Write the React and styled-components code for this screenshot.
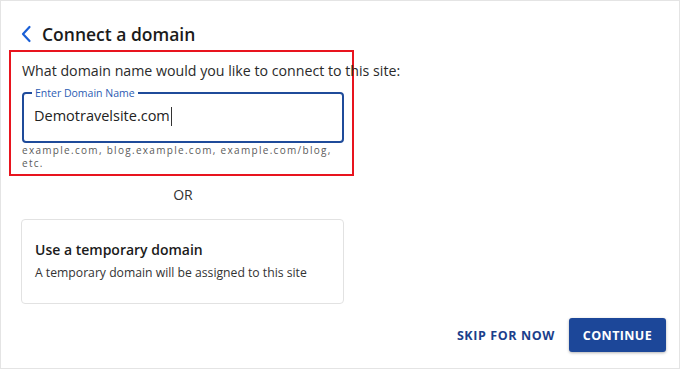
import React from "react";
import styled, { createGlobalStyle } from "styled-components";

const GlobalStyle = createGlobalStyle`
  html, body {
    margin: 0;
    padding: 0;
    background: #fff;
  }
  * {
    box-sizing: border-box;
  }
`;

const BackIcon = () => (
  <svg width="12" height="18" viewBox="0 0 12 18" fill="none">
    <path
      d="M9.5 2 L3 9 L9.5 16"
      stroke="#1a5fd6"
      strokeWidth="2.2"
      strokeLinecap="round"
      strokeLinejoin="round"
    />
  </svg>
);

const App = () => {
  return (
    <>
      <GlobalStyle />
      <Frame>
        <Header>
          <BackIcon />
          <Title>Connect a domain</Title>
        </Header>

        <Highlight>
          <Question>What domain name would you like to connect to this site:</Question>
          <Field>
            <Legend>Enter Domain Name</Legend>
            <FieldValue>
              Demotravelsite.com
              <Caret />
            </FieldValue>
          </Field>
          <Helper>example.com, blog.example.com, example.com/blog, etc.</Helper>
        </Highlight>

        <Divider>OR</Divider>

        <Card>
          <CardTitle>Use a temporary domain</CardTitle>
          <CardText>A temporary domain will be assigned to this site</CardText>
        </Card>

        <Actions>
          <TextButton>SKIP FOR NOW</TextButton>
          <PrimaryButton>CONTINUE</PrimaryButton>
        </Actions>
      </Frame>
    </>
  );
};

export default App;

const Frame = styled.div`
  width: 680px;
  height: 369px;
  border: 1px solid #e4e4e4;
  display: flex;
  flex-direction: column;
  font-family: "Open Sans", "Noto Sans", sans-serif;
  color: #222;
  overflow: hidden;
`;

const Header = styled.div`
  display: flex;
  align-items: center;
  gap: 10px;
  height: 24px;
  margin-top: 21px;
  padding-left: 19px;
`;

const Title = styled.h1`
  margin: 0;
  font-size: 17.5px;
  font-weight: 600;
  line-height: 24px;
  color: #1b1b1b;
`;

const Highlight = styled.div`
  margin: 4px 0 0 8px;
  width: 345px;
  height: 126px;
  border: 2px solid #e8141e;
  padding: 9px 10px 0 11px;
  display: flex;
  flex-direction: column;
`;

const Question = styled.p`
  margin: 0;
  font-size: 14.2px;
  line-height: 20px;
  color: #2a2a2a;
  white-space: nowrap;
`;

const Field = styled.fieldset`
  margin: 6px 0 0 0;
  width: 322px;
  height: 56px;
  border: 2px solid #1f4b9a;
  border-radius: 4px;
  padding: 0 10px;
`;

const Legend = styled.legend`
  font-size: 10.5px;
  line-height: 12px;
  color: #2c5cb3;
  padding: 0 3px;
  margin-left: -2px;
`;

const FieldValue = styled.div`
  display: flex;
  align-items: center;
  margin-top: 6px;
  font-size: 14.5px;
  line-height: 22px;
  color: #222;
`;

const Caret = styled.span`
  display: inline-block;
  width: 1px;
  height: 19px;
  background: #333;
  margin-left: 1px;
`;

const Helper = styled.div`
  width: 322px;
  margin-top: 1px;
  font-size: 10px;
  line-height: 13px;
  letter-spacing: 1.3px;
  color: #5a5a5a;
`;

const Divider = styled.div`
  width: 364px;
  text-align: center;
  margin-top: 9px;
  font-size: 14px;
  line-height: 20px;
  color: #333;
`;

const Card = styled.div`
  margin: 14px 0 0 20px;
  width: 323px;
  height: 85px;
  border: 1px solid #e2e2e2;
  border-radius: 4px;
  padding: 20px 14px 0 13px;
`;

const CardTitle = styled.div`
  font-size: 14px;
  font-weight: 600;
  line-height: 20px;
  color: #1b1b1b;
`;

const CardText = styled.div`
  margin-top: 4px;
  font-size: 12.2px;
  line-height: 18px;
  color: #333;
`;

const Actions = styled.div`
  margin-top: auto;
  display: flex;
  justify-content: flex-end;
  align-items: center;
  gap: 14px;
  padding: 0 13px 16px 0;
`;

const TextButton = styled.button`
  border: none;
  background: none;
  padding: 0;
  font-family: "Open Sans", "Noto Sans", sans-serif;
  font-size: 12.5px;
  font-weight: 700;
  letter-spacing: 0.6px;
  color: #1b3f8c;
  cursor: pointer;
`;

const PrimaryButton = styled.button`
  width: 97px;
  height: 34px;
  border: none;
  border-radius: 3px;
  background: #1c4799;
  box-shadow: 0 1px 3px rgba(0, 0, 0, 0.3);
  font-family: "Open Sans", "Noto Sans", sans-serif;
  font-size: 12.5px;
  font-weight: 700;
  letter-spacing: 0.4px;
  color: #fff;
  cursor: pointer;
`;
